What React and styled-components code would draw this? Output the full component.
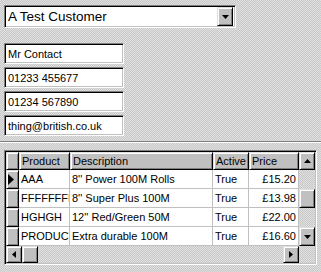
import React from "react";
import styled, { createGlobalStyle, css } from "styled-components";

const GlobalStyle = createGlobalStyle`
  html, body {
    margin: 0;
    padding: 0;
  }
  body {
    font-family: "Liberation Sans", Arial, sans-serif;
    font-size: 11px;
    color: #000;
  }
`;

const dither = css`
  background-color: #d4d4d4;
  background-image: repeating-conic-gradient(#c8c8c8 0 25%, #e0e0e0 0 50%);
  background-size: 2px 2px;
`;

const sunken = css`
  border: 1px solid;
  border-color: #808080 #fff #fff #808080;
  box-shadow: inset 1px 1px #000, inset -1px -1px #c0c0c0;
`;

const raised = css`
  border: 1px solid;
  border-color: #dfdfdf #000 #000 #dfdfdf;
  box-shadow: inset 1px 1px #fff, inset -1px -1px #808080;
  background: #c0c0c0;
`;

const customers = {
  name: "A Test Customer",
  contact: "Mr Contact",
  phone: "01233 455677",
  fax: "01234 567890",
  email: "thing@british.co.uk",
};

const products = [
  { code: "AAA", desc: "8'' Power 100M Rolls", active: "True", price: "£15.20" },
  { code: "FFFFFFFF", desc: "8'' Super Plus 100M", active: "True", price: "£13.98" },
  { code: "HGHGH", desc: "12'' Red/Green 50M", active: "True", price: "£22.00" },
  { code: "PRODUCT1", desc: "Extra durable 100M", active: "True", price: "£16.60" },
];

const cols = [
  { key: "code", title: "Product", width: 51 },
  { key: "desc", title: "Description", width: 143 },
  { key: "active", title: "Active", width: 36 },
  { key: "price", title: "Price", width: 50, right: true },
];

const Page = styled.div`
  ${dither};
  width: 321px;
  height: 272px;
  overflow: hidden;
  display: flex;
  flex-direction: column;
`;

const TopPanel = styled.div`
  padding: 5px 4px 0;
  height: 141px;
  box-sizing: border-box;
  display: flex;
  flex-direction: column;
`;

const Combo = styled.div`
  ${sunken};
  width: 232px;
  height: 23px;
  box-sizing: border-box;
  background: #fff;
  display: flex;
  align-items: center;
  padding: 2px;
`;

const ComboText = styled.div`
  flex: 1;
  font-size: 13.5px;
  padding-left: 1px;
  white-space: nowrap;
`;

const DropButton = styled.div`
  ${raised};
  width: 16px;
  height: 19px;
  box-sizing: border-box;
  display: flex;
  align-items: center;
  justify-content: center;
`;

const Fields = styled.div`
  margin-top: 15px;
  display: flex;
  flex-direction: column;
  gap: 3px;
`;

const Field = styled.div`
  ${sunken};
  width: 120px;
  height: 21px;
  box-sizing: border-box;
  background: #fff;
  padding: 0 3px;
  display: flex;
  align-items: center;
  white-space: nowrap;
`;

const Separator = styled.div`
  height: 0;
  border-top: 1px solid #808080;
  border-bottom: 1px solid #fff;
`;

const GridFrame = styled.div`
  ${sunken};
  margin: 7px 4px 0;
  width: 313px;
  box-sizing: border-box;
  background: #fff;
  display: flex;
  flex-direction: column;
  padding: 1px;
`;

const GridBody = styled.div`
  display: flex;
`;

const Table = styled.div`
  display: flex;
  flex-direction: column;
`;

const Row = styled.div`
  display: flex;
  height: ${(p) => p.$h}px;
`;

const HeadCell = styled.div`
  ${raised};
  width: ${(p) => p.$w}px;
  box-sizing: border-box;
  padding: 0 2px;
  display: flex;
  align-items: center;
  white-space: nowrap;
  overflow: hidden;
`;

const Cell = styled.div`
  width: ${(p) => p.$w}px;
  box-sizing: border-box;
  border-right: 1px solid #c0c0c0;
  border-bottom: 1px solid #c0c0c0;
  padding: 0 2px;
  display: flex;
  align-items: center;
  justify-content: ${(p) => (p.$right ? "flex-end" : "flex-start")};
  white-space: nowrap;
  overflow: hidden;
`;

const Indicator = styled.div`
  ${raised};
  width: 13px;
  box-sizing: border-box;
  display: flex;
  align-items: center;
  justify-content: flex-start;
  padding-left: 1px;
`;

const VScroll = styled.div`
  ${dither};
  width: 16px;
  display: flex;
  flex-direction: column;
`;

const HScroll = styled.div`
  display: flex;
  height: 17px;
`;

const HTrack = styled.div`
  ${dither};
  display: flex;
  width: 293px;
`;

const ScrollButton = styled.div`
  ${raised};
  width: ${(p) => p.$w || 16}px;
  height: ${(p) => p.$h || 16}px;
  box-sizing: border-box;
  display: flex;
  align-items: center;
  justify-content: center;
  flex-shrink: 0;
`;

const Spacer = styled.div`
  flex: 1;
`;

const Corner = styled.div`
  ${dither};
  width: 16px;
`;

const Arrow = ({ dir }) => {
  const pts = {
    down: "0,0 7,0 3.5,4",
    up: "3.5,0 7,4 0,4",
    left: "4,0 4,7 0,3.5",
    right: "0,0 4,3.5 0,7",
  }[dir];
  const vertical = dir === "up" || dir === "down";
  return (
    <svg width={vertical ? 7 : 4} height={vertical ? 4 : 7} style={{ display: "block" }}>
      <polygon points={pts} fill="#000" />
    </svg>
  );
};

const App = () => {
  return (
    <>
      <GlobalStyle />
      <Page>
        <TopPanel>
          <Combo>
            <ComboText>{customers.name}</ComboText>
            <DropButton>
              <Arrow dir="down" />
            </DropButton>
          </Combo>
          <Fields>
            <Field>{customers.contact}</Field>
            <Field>{customers.phone}</Field>
            <Field>{customers.fax}</Field>
            <Field>{customers.email}</Field>
          </Fields>
        </TopPanel>
        <Separator />
        <GridFrame>
          <GridBody>
            <Table>
              <Row $h={18}>
                <Indicator />
                {cols.map((c) => (
                  <HeadCell key={c.key} $w={c.width}>
                    {c.title}
                  </HeadCell>
                ))}
              </Row>
              {products.map((p, i) => (
                <Row key={p.code} $h={19}>
                  <Indicator>
                    {i === 0 && (
                      <svg width="6" height="11" style={{ display: "block" }}>
                        <polygon points="0,0 6,5.5 0,11" fill="#000" />
                      </svg>
                    )}
                  </Indicator>
                  {cols.map((c) => (
                    <Cell key={c.key} $w={c.width} $right={c.right}>
                      {p[c.key]}
                    </Cell>
                  ))}
                </Row>
              ))}
            </Table>
            <VScroll>
              <ScrollButton $h={18}>
                <Arrow dir="up" />
              </ScrollButton>
              <Spacer style={{ maxHeight: 19 }} />
              <ScrollButton $h={19} />
              <Spacer />
              <ScrollButton $h={19}>
                <Arrow dir="down" />
              </ScrollButton>
            </VScroll>
          </GridBody>
          <HScroll>
            <HTrack>
              <ScrollButton $h={17}>
                <Arrow dir="left" />
              </ScrollButton>
              <ScrollButton $h={17} />
              <Spacer />
              <ScrollButton $h={17}>
                <Arrow dir="right" />
              </ScrollButton>
            </HTrack>
            <Corner />
          </HScroll>
        </GridFrame>
      </Page>
    </>
  );
};

export default App;
